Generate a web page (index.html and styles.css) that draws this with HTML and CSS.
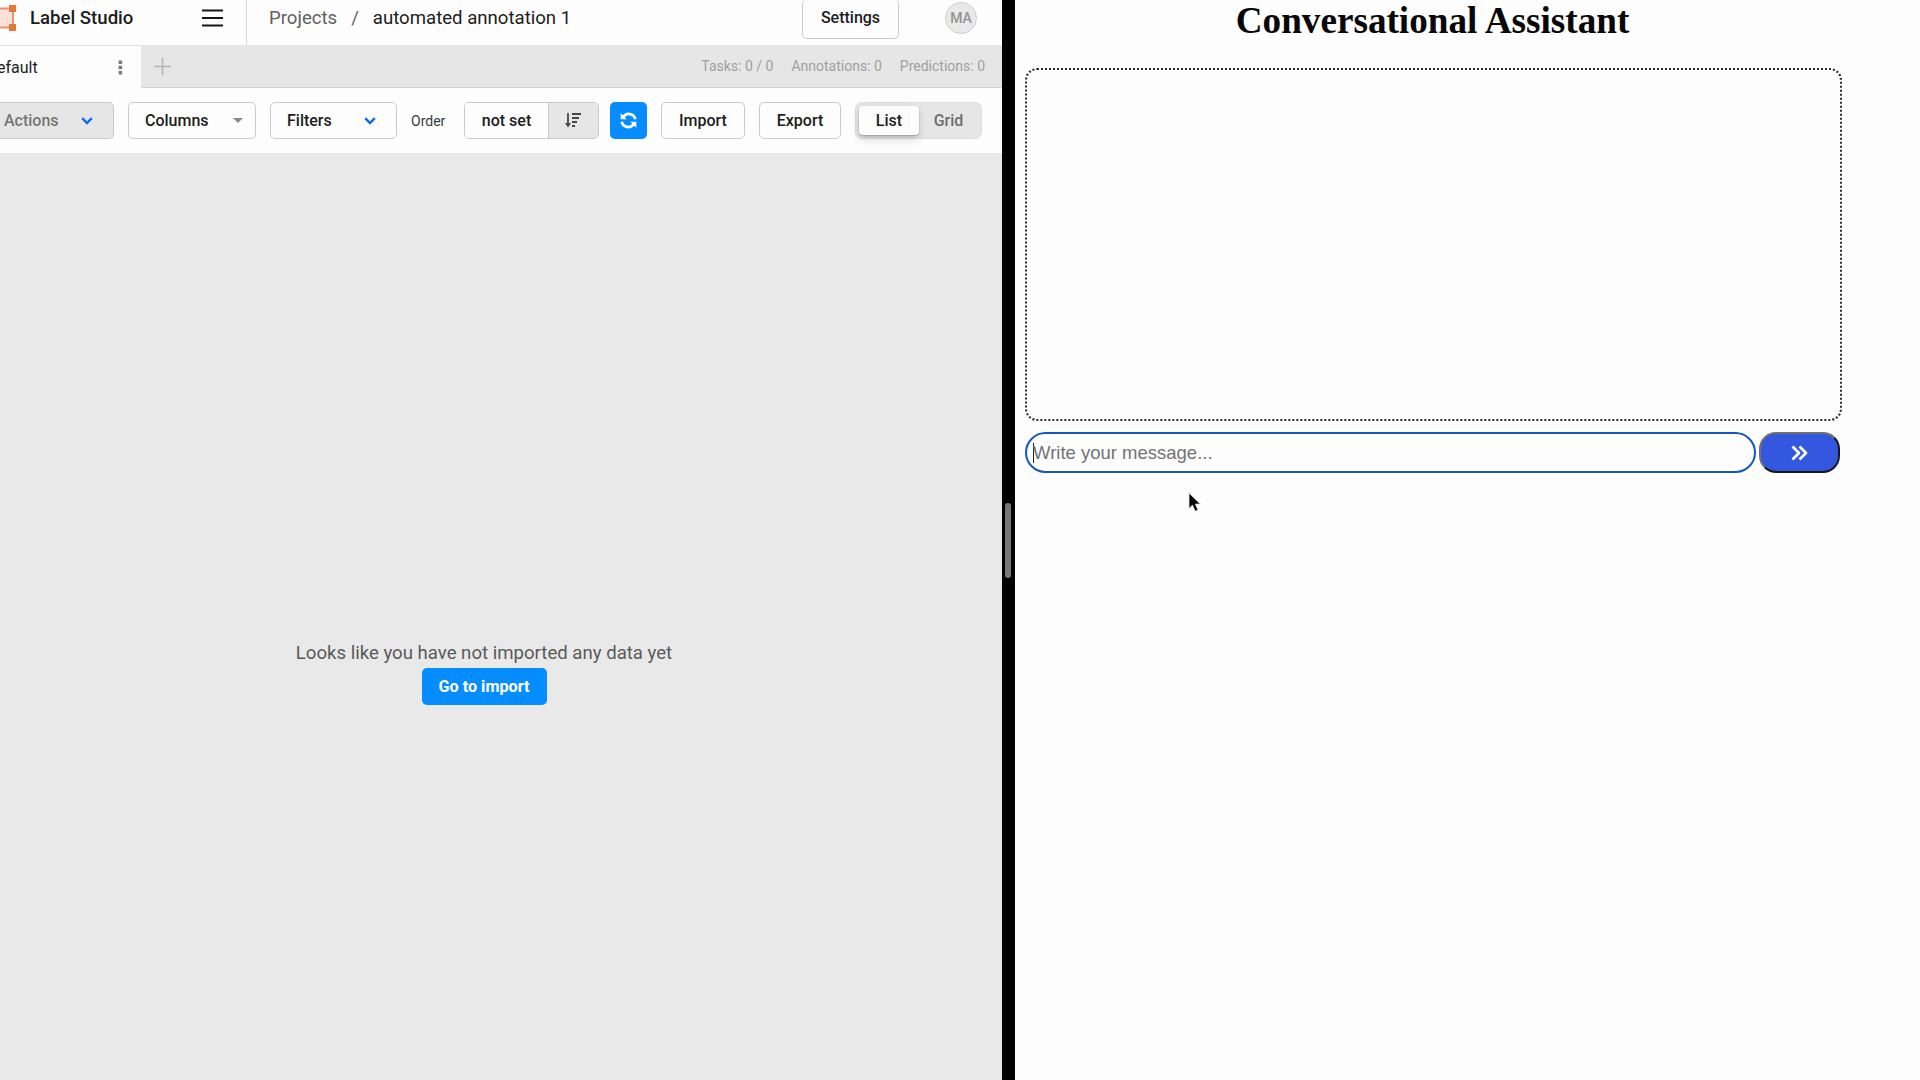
FILE: index.html
```html
<!DOCTYPE html>
<html lang="en">
<head>
<meta charset="utf-8">
<title>Label Studio</title>
<link rel="stylesheet" href="styles.css">
</head>
<body>
<main class="studio">
  <header class="topbar">
    <div class="brand">
      <svg class="logo" width="16" height="28" viewBox="0 0 16 28"><rect x="-8" y="4.500" width="21" height="19" fill="#fbe0d8" stroke="#ec9272" stroke-width="2"/><path d="M9 1h7v7H9zM9 20h7v7H9z" fill="#e07a38"/></svg>
      <span class="brand-name">Label Studio</span>
      <svg class="burger" width="22" height="18" viewBox="0 0 22 18"><path d="M0 1.500h21M0 9h21M0 16.500h21" stroke="#161616" stroke-width="2"/></svg>
    </div>
    <nav class="crumbs"><span class="muted">Projects</span><span class="slash">/</span><span>automated annotation 1</span></nav>
    <button class="btn settings">Settings</button>
    <span class="avatar">MA</span>
  </header>
  <div class="tabs">
    <div class="tab"><span class="tab-name">efault</span><svg width="5" height="15" viewBox="0 0 5 15"><path d="M.6.500h3.600v3.600H.6zM.6 5.700h3.600v3.600H.6zM.6 10.900h3.600v3.600H.6z" fill="#7c7c7c"/></svg></div>
    <svg class="plus" width="17" height="17" viewBox="0 0 17 17"><path d="M8.500 0v17M0 8.500h17" stroke="#b4b4b4" stroke-width="1.600"/></svg>
    <div class="stats"><span>Tasks: 0 / 0</span><span>Annotations: 0</span><span>Predictions: 0</span></div>
  </div>
  <div class="toolbar">
    <button class="btn actions">Actions<svg width="12" height="8" viewBox="0 0 12 8"><path d="M1.200 1.200 6 6l4.800-4.800" fill="none" stroke="#0d6ce8" stroke-width="2.400"/></svg></button>
    <button class="btn columns">Columns<svg width="10" height="5" viewBox="0 0 10 5"><path d="M0 0h10L5 5z" fill="#8a8a8a"/></svg></button>
    <button class="btn filters">Filters<svg width="12" height="8" viewBox="0 0 12 8"><path d="M1.200 1.200 6 6l4.800-4.800" fill="none" stroke="#0d6ce8" stroke-width="2.400"/></svg></button>
    <span class="order">Order</span>
    <div class="sort"><button class="sort-field">not set</button><button class="sort-dir"><svg width="16" height="15" viewBox="0 0 16 15"><path d="M3 0v13M7 1h9M7 5h7M7 9h5M7 13h3" fill="none" stroke="#484848" stroke-width="1.800"/><path d="M0 10h6L3 14.500z" fill="#484848"/></svg></button></div>
    <button class="refresh"><svg width="17" height="17" viewBox="0 0 17 17"><path d="M3.200 5.200A6.600 6.600 0 0 1 15.300 7.200M13.800 11.800A6.600 6.600 0 0 1 1.700 9.800" fill="none" stroke="#fff" stroke-width="2.700"/><path d="M.700 1.300v6h6zM16.300 15.700v-6h-6z" fill="#fff"/></svg></button>
    <button class="btn import">Import</button>
    <button class="btn export">Export</button>
    <div class="toggle"><button class="on">List</button><button class="off">Grid</button></div>
  </div>
  <section class="empty">
    <p>Looks like you have not imported any data yet</p>
    <button class="primary">Go to import</button>
  </section>
</main>
<div class="divider"><span class="grip"></span></div>
<aside class="chat">
  <h1>Conversational Assistant</h1>
  <div class="log"></div>
  <div class="composer">
    <div class="field"><span class="caret"></span><span>Write your message...</span></div>
    <button class="send"><svg width="17" height="16" viewBox="0 0 17 16"><path d="m1.500 1.500 6.500 6.500-6.500 6.500M8.500 1.500l6.500 6.500-6.500 6.500" fill="none" stroke="#fff" stroke-width="2.700" stroke-linejoin="round"/></svg></button>
  </div>
  <svg class="pointer" width="14" height="20" viewBox="0 0 14 20"><path d="M1 1v15.500l3.500-3.300 2.600 6 2.900-1.300-2.600-5.800h5z" fill="#080808" stroke="#e8e8e8" stroke-width=".8"/></svg>
</aside>
</body>
</html>
```

FILE: styles.css
```css
* { box-sizing: border-box; }
body { margin: 0; height: 1080px; display: flex; overflow: hidden; background: #fdfdfd; font-family: Roboto, sans-serif; color: #1c1c1c; }
button { font: inherit; color: inherit; padding: 0; margin: 0; }
svg { display: block; flex: none; }
.studio { width: 1002px; display: flex; flex-direction: column; background: #e9e9e9; }
.topbar { height: 45px; display: flex; background: #fdfdfd; padding-right: 25px; font-size: 18.6px; line-height: 36px; }
.brand { width: 247px; border-right: 1px solid #d8d8d6; display: flex; }
.logo { margin-top: 4px; }
.brand-name { width: 172px; padding-left: 14px; font-weight: 500; white-space: nowrap; }
.burger { margin: 9px 0 0 14px; }
.crumbs { flex: 1; padding-left: 22px; display: flex; white-space: nowrap; }
.muted { color: #616161; }
.slash { margin: 0 14px 0 14px; color: #616161; }
.btn { height: 37px; border: 1px solid #c9c9cf; border-radius: 5px; background: #fdfdfd; font-size: 16px; font-weight: 500; display: flex; align-items: center; justify-content: center; white-space: nowrap; }
.settings { width: 97px; height: 40px; margin-top: -1px; margin-right: 46px; border-top: 0; padding-bottom: 2px; }
.avatar { width: 32px; height: 32px; margin-top: 2px; border: 1px solid #d0d0d0; border-radius: 50%; background: #e9e9e9; color: #949494; font-size: 14px; font-weight: 500; line-height: 31px; text-align: center; }
.tabs { height: 43px; display: flex; align-items: center; padding-right: 17px; background: #e6e6e6; border-bottom: 1px solid #d2d2d2; }
.tab { width: 141px; height: 43px; margin-bottom: -1px; border-top: 1px solid #e0e0e0; display: flex; align-items: center; justify-content: space-between; padding-right: 18px; background: #fdfdfd; font-size: 16px; }
.tab-name { margin-left: -3px; }
.plus { margin-left: 13px; }
.stats { margin-left: auto; display: flex; gap: 18px; font-size: 14px; color: #a0a0a0; white-space: nowrap; }
.toolbar { height: 65px; display: flex; align-items: center; background: #fdfdfd; }
.actions { width: 114px; margin-right: 14px; background: #e6e6e6; color: #757575; border-left: 0; border-radius: 0 5px 5px 0; justify-content: space-between; padding: 0 20px 0 4px; }
.columns { width: 128px; margin-right: 14px; justify-content: space-between; padding: 0 12px 0 16px; }
.filters { width: 127px; justify-content: space-between; padding: 0 20px 0 16px; }
.order { width: 67px; padding-left: 14px; font-size: 14px; color: #3a3a3a; }
.sort { width: 135px; height: 37px; display: flex; border: 1px solid #c9c9cf; border-radius: 5px; overflow: hidden; }
.sort button { border: 0; background: #fdfdfd; font-size: 16px; font-weight: 500; }
.sort .sort-field { width: 83px; }
.sort .sort-dir { flex: 1; background: #e6e6e6; border-left: 1px solid #c9c9cf; display: flex; align-items: center; justify-content: center; padding-right: 2px; }
.refresh { width: 37px; height: 37px; margin: 0 14px 0 11px; border: 0; border-radius: 5px; background: #058dff; display: flex; align-items: center; justify-content: center; }
.import { width: 84px; margin-right: 14px; }
.export { width: 82px; margin-right: 14px; }
.toggle { width: 127px; height: 37px; display: flex; align-items: center; padding-left: 3px; border: 1px solid #dcdcdc; border-radius: 7px; background: #e6e6e6; }
.toggle button { border: 0; font-size: 16px; font-weight: 500; }
.toggle .on { width: 60px; height: 29px; border-radius: 4px; background: #fdfdfd; box-shadow: 0 1px 2px #0004, 0 5px 10px #0002; }
.toggle .off { width: 59px; background: none; color: #6d6d6d; }
.empty { padding: 489px 0 0; width: 968px; display: flex; flex-direction: column; align-items: center; }
.empty p { margin: 0; height: 26px; line-height: 23px; font-size: 18.6px; color: #5a5a5a; white-space: nowrap; }
.primary { width: 125px; height: 37px; padding-bottom: 1px; border: 0; border-radius: 5px; background: #058dff; color: #fff; font-size: 16.2px; font-weight: 700; }
.divider { width: 13px; background: #000; display: flex; align-items: center; justify-content: center; }
.grip { width: 6px; height: 75px; margin-right: 1px; border-radius: 3px; background: #777; }
.chat { flex: 1; padding: 0 78px 0 10px; background: #fdfdfd; position: relative; }
h1 { margin: 0 2px 0 0; height: 68px; font: 700 37.2px/42px "Liberation Serif", serif; text-align: center; color: #080808; }
.log { height: 353px; border: 2px dotted #2b2b2b; border-radius: 12px; }
.composer { margin-top: 11px; height: 41px; display: flex; gap: 3px; }
.field { width: 731px; border: 2px solid #1458bd; border-radius: 21px; display: flex; align-items: center; padding-left: 6px; font: 18.5px "Liberation Sans", sans-serif; color: #737373; }
.caret { width: 1px; height: 20px; margin-right: -1px; background: #222; }
.send { width: 81px; border: 2px solid; border-color: #707070 #181818 #181818 #707070; border-radius: 17px; background: #3357df; display: flex; align-items: center; justify-content: center; }
.pointer { position: absolute; left: 173px; top: 492px; }
```
